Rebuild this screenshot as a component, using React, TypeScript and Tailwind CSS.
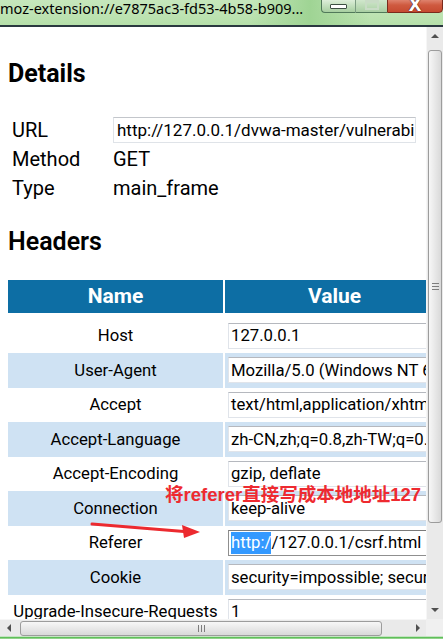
import React from 'react';

const headers: [string, string][] = [
  ['Host', '127.0.0.1'],
  ['User-Agent', 'Mozilla/5.0 (Windows NT 6.1; WOW64; rv:52.0) Gecko/20100101 Firefox/52.0'],
  ['Accept', 'text/html,application/xhtml+xml,application/xml;q=0.9,*/*;q=0.8'],
  ['Accept-Language', 'zh-CN,zh;q=0.8,zh-TW;q=0.7,zh-HK;q=0.5,en-US;q=0.3,en;q=0.2'],
  ['Accept-Encoding', 'gzip, deflate'],
  ['Connection', 'keep-alive'],
  ['Referer', 'http://127.0.0.1/csrf.html'],
  ['Cookie', 'security=impossible; security=impossible; PHPSESSID=8ab2'],
  ['Upgrade-Insecure-Requests', '1'],
];

function TitleBar() {
  return (
    <div className="relative h-[25px] bg-gradient-to-b from-[#c6e7bc] via-[#bfe4b4] to-[#b6e0aa] overflow-hidden">
      <div className="absolute left-[250px] top-0 h-[25px] w-[120px] bg-gradient-to-r from-transparent via-[#9fd494] to-transparent" />
      <div className="relative h-[16px] leading-[16px] text-[14.5px] text-black whitespace-nowrap [font-family:'Noto_Sans',sans-serif]">
        moz-extension://e7875ac3-fd53-4b58-b909...
      </div>
      {/* window buttons */}
      <div className="absolute right-0 top-[-3px] flex h-[16px]">
        <div className="w-[35px] h-full rounded-bl-[4px] border border-[#51795a] border-r-[#7c9c82] bg-gradient-to-b from-[#e6f3e3] to-[#a7cfa0] flex items-center justify-center">
          <div className="mt-[3px] w-[17px] h-[5px] bg-white border border-[#3d4f43] rounded-[1px]" />
        </div>
        <div className="w-[31px] h-full border-y border-[#51795a] bg-gradient-to-b from-[#d7ebd3] to-[#a9cfa3] flex items-center justify-center">
          <div className="mt-[-2px] w-[14px] h-[11px] border-2 border-[#c9dcc6] border-t-[4px] bg-transparent" />
        </div>
        <div className="w-[56px] h-full rounded-br-[4px] border border-[#7a2a1c] bg-gradient-to-b from-[#e4927f] via-[#cf5a40] to-[#c64a30] flex items-center justify-center">
          <span className="mt-[1px] text-[17px] leading-none font-bold text-white [font-family:'DejaVu_Sans',sans-serif] [text-shadow:0_0_1px_#3a1008,0_0_1px_#3a1008]">
            X
          </span>
        </div>
      </div>
    </div>
  );
}

function VScroll() {
  return (
    <div className="w-[17px] h-full flex flex-col bg-[#eaeaea] border-l border-[#f6f6f6]">
      <div className="h-[17px] flex items-center justify-center">
        <div className="w-0 h-0 border-l-[4px] border-r-[4px] border-b-[4px] border-l-transparent border-r-transparent border-b-[#505050]" />
      </div>
      <div className="flex-1 px-[1px]">
        <div className="mt-[6px] h-[473px] rounded-[3px] border border-[#9c9c9c] bg-gradient-to-r from-[#f7f7f7] to-[#d9d9d9] flex flex-col items-center justify-center gap-[2px]">
          <div className="w-[7px] h-[1px] bg-[#7d7d7d]" />
          <div className="w-[7px] h-[1px] bg-[#7d7d7d]" />
          <div className="w-[7px] h-[1px] bg-[#7d7d7d]" />
        </div>
      </div>
      <div className="h-[17px] flex items-start justify-center pt-[6px]">
        <div className="w-0 h-0 border-l-[4px] border-r-[4px] border-t-[4px] border-l-transparent border-r-transparent border-t-[#505050]" />
      </div>
    </div>
  );
}

function HScroll() {
  return (
    <div className="flex h-[17px]">
      <div className="w-[426px] h-full flex items-center bg-[#eaeaea] border-t border-[#f6f6f6]">
        <div className="w-[17px] h-full flex items-center justify-center">
          <div className="w-0 h-0 border-t-[4px] border-b-[4px] border-r-[4px] border-t-transparent border-b-transparent border-r-[#505050]" />
        </div>
        <div className="ml-[3px] w-[362px] h-[15px] rounded-[3px] border border-[#9c9c9c] bg-gradient-to-b from-[#f7f7f7] to-[#d9d9d9] flex items-center justify-center gap-[2px]">
          <div className="w-[1px] h-[7px] bg-[#7d7d7d]" />
          <div className="w-[1px] h-[7px] bg-[#7d7d7d]" />
          <div className="w-[1px] h-[7px] bg-[#7d7d7d]" />
        </div>
        <div className="flex-1" />
        <div className="w-[17px] h-full flex items-center justify-center">
          <div className="w-0 h-0 border-t-[4px] border-b-[4px] border-l-[4px] border-t-transparent border-b-transparent border-l-[#505050]" />
        </div>
      </div>
      <div className="w-[17px] h-full bg-[#f0f0f0]" />
    </div>
  );
}

function InfoRow({ label, children, h }: { label: string; children: React.ReactNode; h: string }) {
  return (
    <div className={`flex items-center ${h}`}>
      <div className="w-[105px] pl-[4px] text-[20px] leading-[24px] text-black">{label}</div>
      <div className="text-[20px] leading-[24px] text-black">{children}</div>
    </div>
  );
}

function ValueBox({ value, selected }: { value: string; selected?: boolean }) {
  return (
    <div
      className={`w-[213px] h-[26px] flex items-center pl-[2px] bg-white border text-[16.7px] text-black whitespace-nowrap overflow-hidden ${
        selected ? 'border-[#8f8f8f] border-t-[#7a7a7a]' : 'border-[#e0e4ea] border-t-[#b5b8be]'
      }`}
    >
      {selected ? (
        <>
          <span className="bg-[#3399ff] text-white leading-[22px]">http:/</span>
          <span>{value.slice(6)}</span>
        </>
      ) : (
        value
      )}
    </div>
  );
}

export default function App() {
  return (
    <div className="w-[443px] h-[639px] overflow-hidden flex flex-col bg-white">
      <TitleBar />
      <div className="h-[2px] bg-[#2a3840]" />

      <div className="flex h-[592px]">
        <div className="relative w-[426px] h-full overflow-hidden pl-[8px] [font-family:Roboto,sans-serif]">
          {/* Details */}
          <h2 className="mt-[32px] h-[30px] text-[25px] leading-[30px] font-bold text-black">Details</h2>
          <div className="mt-[26px] w-[600px]">
            <InfoRow label="URL" h="h-[30px]">
              <div className="w-[303px] h-[26px] flex items-center pl-[3px] border border-[#dfe3e8] border-t-[#c3c6cb] text-[17px] whitespace-nowrap overflow-hidden">
                http://127.0.0.1/dvwa-master/vulnerabilities/csrf/?password_new=123
              </div>
            </InfoRow>
            <InfoRow label="Method" h="h-[28px]">
              GET
            </InfoRow>
            <InfoRow label="Type" h="h-[29px]">
              main_frame
            </InfoRow>
          </div>

          {/* Headers */}
          <h2 className="mt-[25px] h-[30px] text-[25px] leading-[30px] font-semibold text-black">Headers</h2>
          <div className="mt-[23px] w-[436px]">
            <div className="flex h-[33px] gap-[2px]">
              <div className="w-[215px] bg-[#0d6ea4] flex items-center justify-center text-[21px] font-bold text-white">
                Name
              </div>
              <div className="w-[219px] bg-[#0d6ea4] flex items-center justify-center text-[21px] font-bold text-white">
                Value
              </div>
            </div>
            <div className="mt-[5.5px]">
              {headers.map(([name, value], i) => {
                const striped = i % 2 === 1;
                return (
                  <div key={name} className="flex h-[34.5px] gap-[2px]">
                    <div
                      className={`w-[215px] flex items-center justify-center text-[16.7px] text-black whitespace-nowrap ${
                        striped ? 'bg-[#cfe2f3]' : 'bg-white'
                      }`}
                    >
                      {name}
                    </div>
                    <div className={`w-[219px] flex items-center pl-[3px] ${striped ? 'bg-[#cfe2f3]' : 'bg-white'}`}>
                      <ValueBox value={value} selected={name === 'Referer'} />
                    </div>
                  </div>
                );
              })}
            </div>
          </div>

          {/* annotation */}
          <div className="absolute left-[165px] top-[458px] text-[18.5px] leading-[20px] font-bold text-[#ee2a30] whitespace-nowrap [font-family:'Liberation_Sans','Noto_Sans_CJK_SC',sans-serif]">
            将referer直接写成本地地址127
          </div>
          <svg className="absolute left-[88px] top-[490px]" width="116" height="26" viewBox="0 0 116 26">
            <path d="M4 7 L96 14.5" stroke="#ec2a2f" strokeWidth="3" strokeLinecap="round" fill="none" />
            <path d="M112 15 L94 8 L96 21 Z" fill="#ec2a2f" />
          </svg>
        </div>
        <VScroll />
      </div>

      <HScroll />
      <div className="h-[3px] bg-gradient-to-b from-[#f4f4f4] via-[#5fbf5a] to-[#a9dca2]" />
    </div>
  );
}
